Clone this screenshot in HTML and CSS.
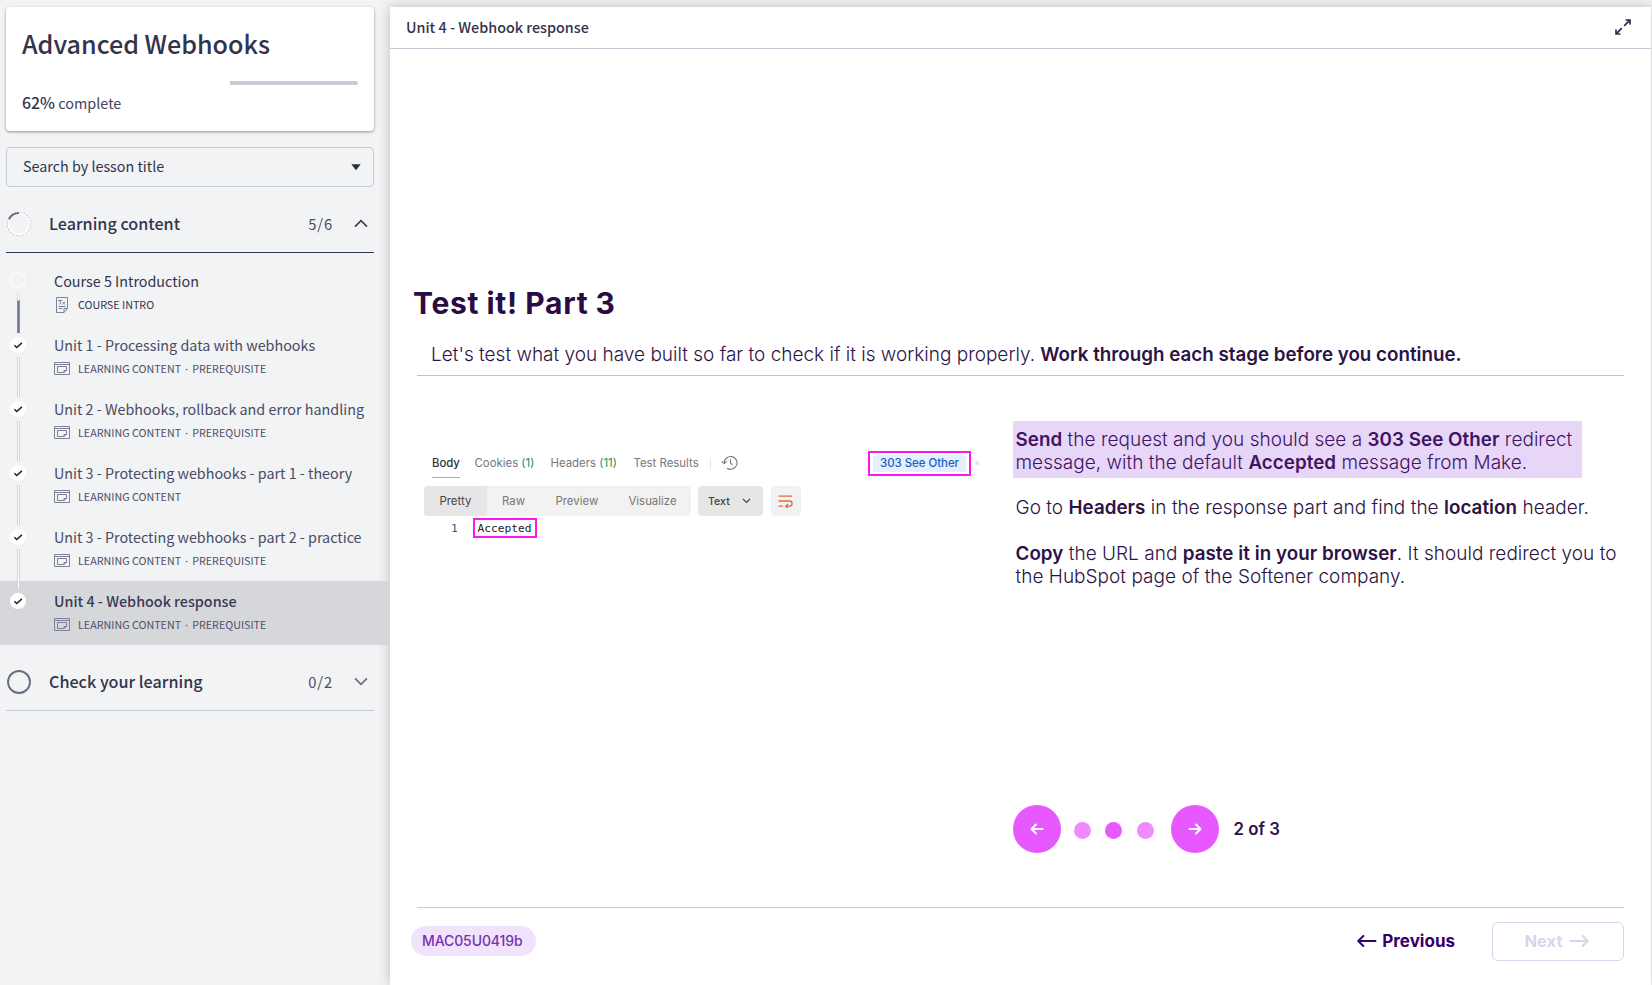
FILE: index.html
```html
<!DOCTYPE html>
<html lang="en">
<head>
<meta charset="utf-8">
<title>Advanced Webhooks</title>
<link rel="stylesheet" href="styles.css">
</head>
<body>
<svg class="defs" width="0" height="0">
  <symbol id="check" viewBox="0 0 16 16"><path d="M4.4 8.2l2.3 2.3 5.2-4.6" fill="none" stroke="#222" stroke-width="1.5"/></symbol>
  <symbol id="window" viewBox="0 0 16 14"><g fill="none" stroke="#7f8196"><path d="M.5 1.500h15v12H.5zM.5 3.500h15"/><path d="M12.500 9.500v-4h-9v6h6.500M12.500 9.500h-2.500v2M12.500 9.500l-2.500 2"/></g></symbol>
</svg>
<div class="app">
  <aside class="sidebar">
    <section class="card">
      <h1 class="card-title">Advanced Webhooks</h1>
      <div class="progress"><div class="progress-rest"></div></div>
      <p class="card-text"><b>62%</b> complete</p>
    </section>
    <div class="search">
      <span>Search by lesson title</span>
      <svg width="10" height="7" viewBox="0 0 10 7"><path d="M.3.3h9.4L5 6.3z" fill="#2e2e48"/></svg>
    </div>
    <div class="section open">
      <svg class="ring" width="24" height="24" viewBox="0 0 24 24" fill="none"><circle cx="12" cy="12" r="11.4" stroke="#b0b1bc" stroke-width="1.1" stroke-dasharray="2 1.2"/><circle cx="12" cy="12" r="10.6" stroke="#fff" stroke-width="1.6"/><path d="M2 7.2A11 11 0 0 1 12 1" stroke="#6b6b84" stroke-width="2"/></svg>
      <span class="section-name">Learning content</span>
      <span class="count">5/6</span>
      <svg width="14" height="9" viewBox="0 0 14 9"><path d="M1 7.6l6-6 6 6" fill="none" stroke="#3b3b55" stroke-width="1.7"/></svg>
    </div>
    <ul class="lessons">
      <li class="lesson">
        <span class="dot empty"></span><span class="link started"></span>
        <div class="name dark">Course 5 Introduction</div>
        <div class="meta dark"><svg class="doc" width="16" height="16" viewBox="0 0 16 16" fill="none" stroke="#7f8196" stroke-width="1"><path d="M2.5.5h11v11l-3.500 4H2.5zM13.500 11.500h-3.500v4"/><path d="M4 3.500h4.500M6.200 3.500v4M8.500 5l2.500 2.500M11 5L8.500 7.500M4.500 9.500h7M4.500 11.500h4"/></svg><span>COURSE INTRO</span></div>
      </li>
      <li class="lesson">
        <span class="dot"><svg width="16" height="16"><use href="#check"/></svg></span><span class="link"></span>
        <div class="name">Unit 1 - Processing data with webhooks</div>
        <div class="meta"><svg width="16" height="14"><use href="#window"/></svg><span>LEARNING CONTENT</span><i>·</i><span>PREREQUISITE</span></div>
      </li>
      <li class="lesson">
        <span class="dot"><svg width="16" height="16"><use href="#check"/></svg></span><span class="link"></span>
        <div class="name">Unit 2 - Webhooks, rollback and error handling</div>
        <div class="meta"><svg width="16" height="14"><use href="#window"/></svg><span>LEARNING CONTENT</span><i>·</i><span>PREREQUISITE</span></div>
      </li>
      <li class="lesson">
        <span class="dot"><svg width="16" height="16"><use href="#check"/></svg></span><span class="link"></span>
        <div class="name">Unit 3 - Protecting webhooks - part 1 - theory</div>
        <div class="meta"><svg width="16" height="14"><use href="#window"/></svg><span>LEARNING CONTENT</span></div>
      </li>
      <li class="lesson">
        <span class="dot"><svg width="16" height="16"><use href="#check"/></svg></span><span class="link"></span>
        <div class="name">Unit 3 - Protecting webhooks - part 2 - practice</div>
        <div class="meta"><svg width="16" height="14"><use href="#window"/></svg><span>LEARNING CONTENT</span><i>·</i><span>PREREQUISITE</span></div>
      </li>
      <li class="lesson current">
        <span class="dot"><svg width="16" height="16"><use href="#check"/></svg></span>
        <div class="name">Unit 4 - Webhook response</div>
        <div class="meta"><svg width="16" height="14"><use href="#window"/></svg><span>LEARNING CONTENT</span><i>·</i><span>PREREQUISITE</span></div>
      </li>
    </ul>
    <div class="section closed">
      <svg class="ring" width="24" height="24" viewBox="0 0 24 24"><circle cx="12" cy="12" r="11" fill="none" stroke="#6b6b84" stroke-width="1.9"/></svg>
      <span class="section-name">Check your learning</span>
      <span class="count">0/2</span>
      <svg width="14" height="9" viewBox="0 0 14 9"><path d="M1 1.400l6 6 6-6" fill="none" stroke="#6b6b84" stroke-width="1.7"/></svg>
    </div>
  </aside>

  <main class="panel">
    <header class="panel-head">
      <span>Unit 4 - Webhook response</span>
      <svg width="18" height="18" viewBox="0 0 18 18" fill="none" stroke="#2e2e48" stroke-width="1.700"><path d="M10.200 7.800L15.600 2.400M11.500 2H16v4.500M7.800 10.200L2.400 15.600M2 11.500V16h4.500"/></svg>
    </header>
    <div class="slide">
      <h2 class="slide-title">Test it! Part 3</h2>
      <p class="lead"><span class="lead-text">Let's test what you have built so far to check if it is working properly.</span> <b>Work through each stage before you continue.</b></p>
      <div class="columns">
        <div class="response">
          <div class="tabs">
            <span class="tab active">Body</span>
            <span class="tab cookies">Cookies <em>(1)</em></span>
            <span class="tab headers">Headers <em>(11)</em></span>
            <span class="tab results">Test Results</span>
            <span class="divider"></span>
            <svg class="history" width="17" height="16" viewBox="0 0 17 16" fill="none" stroke="#777" stroke-width="1.100"><path d="M3.200 8A6.400 6.400 0 1 1 6 13.200M.800 6.300L3.200 8.600l2.300-2.300M9.500 4.300V8l2 1.800"/></svg>
            <span class="status"><span>303 See Other</span></span>
            <span class="speck"></span>
          </div>
          <div class="tools">
            <div class="modes"><span class="on">Pretty</span><span class="raw">Raw</span><span class="preview">Preview</span><span>Visualize</span></div>
            <div class="format"><span>Text</span><svg width="9" height="6" viewBox="0 0 9 6"><path d="M1 1l3.500 3.500L8 1" fill="none" stroke="#444" stroke-width="1.200"/></svg></div>
            <div class="wrap"><svg width="15" height="13" viewBox="0 0 15 13" fill="none" stroke="#e0694a" stroke-width="1.300"><path d="M.500 1.200h13.500M.500 6h11a2.600 2.600 0 0 1 0 5.200H8M.500 11.200h4.500M10 9l-2.200 2.200L10 13"/></svg></div>
          </div>
          <div class="code"><span class="line-no">1</span><span class="result">Accepted</span></div>
        </div>
        <div class="steps">
          <p class="marked"><b>Send</b> the request and you should see a <b>303 See Other</b> redirect<br>message, with the default <b>Accepted</b> message from Make.</p>
          <p>Go to <b>Headers</b> in the response part and find the <b>location</b> header.</p>
          <p><b>Copy</b> the URL and <b>paste it in your browser</b>. It should redirect you to<br>the HubSpot page of the Softener company.</p>
          <div class="pager">
            <span class="round"><svg width="14" height="12" viewBox="0 0 14 12"><path d="M12.500 6h-11M6 1.500L1.500 6 6 10.500" fill="none" stroke="#fff" stroke-width="1.900" stroke-linecap="round" stroke-linejoin="round"/></svg></span>
            <span class="pip p1"></span><span class="pip p2"></span><span class="pip p3"></span>
            <span class="round"><svg width="14" height="12" viewBox="0 0 14 12"><path d="M1.500 6h11M8 1.500L12.500 6 8 10.500" fill="none" stroke="#fff" stroke-width="1.900" stroke-linecap="round" stroke-linejoin="round"/></svg></span>
            <span class="page">2 of 3</span>
          </div>
        </div>
      </div>
      <footer class="foot">
        <span class="tag">MAC05U0419b</span>
        <span class="prev"><svg width="20" height="12" viewBox="0 0 20 12"><path d="M18.500 6H1.500M6.300 1L1.300 6l5 5" fill="none" stroke="#35006b" stroke-width="2" stroke-linecap="round" stroke-linejoin="round"/></svg>Previous</span>
        <span class="next">Next<svg width="20" height="12" viewBox="0 0 20 12"><path d="M1.500 6h17M13.700 1l5 5-5 5" fill="none" stroke="#ded3ea" stroke-width="2" stroke-linecap="round" stroke-linejoin="round"/></svg></span>
      </footer>
    </div>
  </main>
</div>
</body>
</html>
```
FILE: styles.css
```css
* { box-sizing: border-box; }
body { margin: 0; background: #f1f3f5; overflow: hidden; }
h1, h2, p, ul { margin: 0; padding: 0; }
ul { list-style: none; }
svg { display: block; flex: none; }
.defs { position: absolute; }

.app {
  display: grid;
  grid-template-columns: 390px 1261px;
  height: 985px;
  padding-top: 7px;
  font-family: "Noto Sans CJK SC", "Noto Sans", sans-serif;
  color: #33334d;
}

/* Sidebar */
.card {
  height: 124px;
  margin: 0 16px 0 6px;
  padding: 17px 16px 0;
  background: #fff;
  border-radius: 4px;
  box-shadow: 0 1px 3px rgba(0, 0, 0, .4);
}
.card-title { font-size: 25.100px; font-weight: 500; line-height: 38px; white-space: nowrap; }
.progress { display: flex; justify-content: flex-end; margin-top: 19px; }
.progress-rest { width: 128px; height: 4px; background: #c9cad6; border-radius: 0 2px 2px 0; }
.card-text { margin-top: 8px; font-size: 14.400px; line-height: 20px; color: #44445c; }
.card-text b { font-size: 15.900px; font-weight: 500; color: #33334d; }

.search {
  display: flex;
  align-items: center;
  justify-content: space-between;
  height: 40px;
  margin: 16px 16px 0 6px;
  padding: 0 12px 2px 16px;
  border: 1px solid #c7cad6;
  border-radius: 4px;
  font-size: 14.330px;
  line-height: 20px;
}
.search svg { margin-top: 2px; }

.section { display: flex; align-items: center; margin: 0 16px 0 6px; padding: 0 6px 0 1px; }
.section.open { height: 66px; padding-bottom: 0; border-bottom: 1px solid #33335a; padding-top: 8px; }
.section.closed { height: 66px; padding-top: 8px; border-bottom: 1px solid #c7cad6; }
.section-name { flex: 1; margin: -2px 0 0 18px; font-size: 16.170px; font-weight: 500; line-height: 24px; }
.count { margin-right: 21px; font-size: 14.700px; line-height: 24px; letter-spacing: .9px; color: #4c4c64; }

.lessons { padding-top: 8px; }
.lesson { position: relative; height: 64px; padding: 9px 0 0 54px; }
.lesson.current { background: #d6d7db; }
.name { font-size: 14.330px; line-height: 21px; white-space: nowrap; color: #4a4a62; }
.current .name { font-weight: 500; color: #3a3a54; }
.meta { display: flex; align-items: center; margin-top: 4px; font-size: 10.740px; line-height: 20px; color: #4f4f68; }
.meta svg { margin: -2px 8px 0 0; }
.meta i { width: 11px; font-family: "Noto Sans", sans-serif; font-style: normal; text-align: center; }
.meta .doc { margin-top: -1px; }
.dark { color: #33334d; }
.dot { position: absolute; z-index: 1; left: 10px; top: 12px; width: 16px; height: 16px; border-radius: 50%; background: #fff; }
.dot.empty { top: 11px; background: none; border: 1px solid #fff; }
.link { position: absolute; z-index: 1; left: 17px; top: 32px; width: 3px; height: 40px; background: #fff; border: solid #d4d5da; border-width: 0 1px; }
.link.started { background: linear-gradient(#fff 8px, #74748c 8px); border-image: linear-gradient(#d9dade 8px, #8d8da0 8px) 1; border-width: 0 1px; }

/* Content panel */
.panel { display: flex; flex-direction: column; background: #fff; box-shadow: 0 0 12px rgba(0, 0, 0, .22); }
.panel-head {
  display: flex;
  align-items: center;
  justify-content: space-between;
  height: 42px;
  padding: 0 19px 2px 16px;
  border-bottom: 1px solid #c7cad6;
  font-size: 14.350px;
  font-weight: 500;
  line-height: 20px;
}
.slide { flex: 1; display: flex; flex-direction: column; padding: 236px 27px 0; font-family: Inter, sans-serif; color: #2d1245; }
.slide-title { margin-left: -4px; font-size: 30px; font-weight: 700; line-height: 36px; letter-spacing: .75px; word-spacing: -.7px; color: #2a0c45; }
.lead { margin-top: 22px; height: 33px; padding-left: 14px; border-bottom: 1px solid #c6c0c9; font-size: 19px; font-weight: 300; line-height: 24px; white-space: nowrap; }
.lead b { font-size: 18.780px; font-weight: 600; }

.columns { display: grid; grid-template-columns: 596px 1fr; height: 531px; }

/* API response */
.response { margin-left: 7px; padding-top: 75px; font-size: 11.400px; color: #777; }
.tabs { display: flex; align-items: center; height: 25px; padding-left: 8px; white-space: nowrap; }
.tab { margin-top: -2px; }
.tab em { font-style: normal; color: #1d8f55; }
.tab.active { position: relative; width: 28px; font-weight: 500; letter-spacing: -.1px; color: #333; }
.tab.active::after { content: ""; position: absolute; left: 0; right: 0; top: 21px; height: 1px; background: #ff8f70; }
.cookies { width: 76px; margin-left: 14.500px; }
.headers { width: 83px; }
.results { width: 76.500px; }
.divider { width: 1px; height: 12px; margin-right: 10px; background: #e6e6e6; }
.history { margin-top: -2px; }
.status { display: flex; margin-left: 130px; padding: 2px 3px; width: 103px; height: 25px; border: 2px solid #ff14f4; }
.status span { flex: 1; background: #e4f0ff; border-radius: 3px; font-weight: 500; line-height: 17px; text-align: center; color: #1560bd; }
.speck { width: 4px; height: 4px; margin: -2px 0 0 4px; border-radius: 50%; background: #e4e4e4; }

.tools { display: flex; gap: 7px; margin-top: 10px; }
.modes { display: flex; width: 267px; height: 30px; background: #f2f2f2; border-radius: 4px; overflow: hidden; line-height: 30px; }
.modes .on { width: 63px; margin-right: 15px; padding-left: 15.500px; background: #e6e6e6; color: #444; }
.modes .raw { width: 53.500px; }
.modes .preview { width: 73px; }
.format { display: flex; align-items: center; justify-content: space-between; width: 65px; height: 30px; padding: 0 12px 0 10px; background: #e6e6e6; border-radius: 4px; font-size: 10.600px; font-weight: 500; color: #444; }
.wrap { display: grid; place-items: center; width: 30px; height: 30px; padding-right: 1px; margin-left: 1px; background: #f2f2f2; border-radius: 4px; }

.code { display: flex; margin-top: 2px; font: 11.200px/15px "DejaVu Sans Mono", monospace; color: #222; }
.line-no { width: 49px; padding: 3px 0 0 27px; color: #3d4f9e; }
.result { width: 64px; height: 20px; padding-left: 2.500px; border: 2px solid #ff14f4; line-height: 17px; }

/* Instructions */
.steps { padding-top: 45px; font-size: 19px; font-weight: 300; line-height: 23px; letter-spacing: .025px; white-space: nowrap; }
.steps p { margin: 0 0 23px 2.500px; }
.steps b { font-size: 18.800px; font-weight: 600; letter-spacing: .04px; }
.steps .marked { width: 569px; height: 57px; margin: 0 0 17.500px; padding: 6.500px 0 0 2.500px; background: #e7d6f8; color: #3f1463; }

.pager { display: flex; align-items: center; margin-top: 217px; }
.round { display: grid; place-items: center; width: 48px; height: 48px; border-radius: 50%; background: #e858ff; }
.pip { width: 17px; height: 17px; margin-top: 3px; border-radius: 50%; background: #f08aff; }
.p1 { margin-left: 13px; }
.p2 { margin-left: 14px; background: #e858ff; }
.p3 { margin: 3px 16.500px 0 15px; }
.page { margin: 1px 0 0 15px; font-size: 16.800px; font-weight: 600; }

.foot { display: flex; align-items: center; height: 68px; border-top: 1px solid #cdc7d0; }
.tag { width: 125px; height: 30px; margin: -2px 0 0 -6px; padding-left: 11px; border-radius: 15px; background: #f0e3fb; font-size: 14px; font-weight: 500; line-height: 30px; letter-spacing: -.1px; color: #7a2fb0; }
.prev { display: flex; align-items: center; gap: 5px; margin: -2px 0 0 auto; font-size: 17px; font-weight: 700; color: #35006b; }
.next { display: flex; align-items: center; justify-content: center; gap: 6px; width: 132px; height: 39px; margin: -1px 0 0 37px; padding-right: 3px; border: 1px solid #ded3ea; border-radius: 6px; font-size: 16.600px; font-weight: 700; color: #ded3ea; }
```
